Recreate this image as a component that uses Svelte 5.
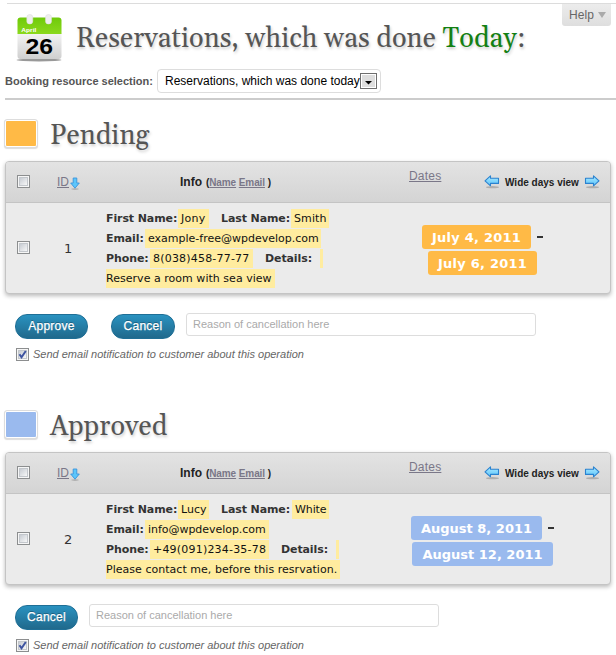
<script>
  const sections = [
    {
      kind: 'pending',
      title: 'Pending',
      id: '1',
      lines: [
        [
          { label: 'First Name:', lw: 72, value: 'Jony', vw: 31, ls: 0.25 },
          { label: 'Last Name:', lw: 70, value: 'Smith', vw: 38, ls: 0.1 }
        ],
        [{ label: 'Email:', lw: 39, value: 'example-free@wpdevelop.com', vw: 176, ls: 0 }],
        [
          { label: 'Phone:', lw: 44, value: '8(038)458-77-77', vw: 103, ls: 0.2 },
          { label: 'Details:', lw: 55, value: '', vw: 3, ls: 0 }
        ]
      ],
      details: 'Reserve a room with sea view',
      detailsWidth: 169,
      dates: ['July 4, 2011', 'July 6, 2011'],
      actions: ['Approve', 'Cancel']
    },
    {
      kind: 'approved',
      title: 'Approved',
      id: '2',
      lines: [
        [
          { label: 'First Name:', lw: 72, value: 'Lucy', vw: 31, ls: 0 },
          { label: 'Last Name:', lw: 71, value: 'White', vw: 37, ls: -0.1 }
        ],
        [{ label: 'Email:', lw: 39, value: 'info@wpdevelop.com', vw: 124, ls: -0.04 }],
        [
          { label: 'Phone:', lw: 44, value: '+49(091)234-35-78', vw: 119, ls: 0.2 },
          { label: 'Details:', lw: 55, value: '', vw: 3, ls: 0 }
        ]
      ],
      details: 'Please contact me, before this resrvation.',
      detailsWidth: 234,
      dates: ['August 8, 2011', 'August 12, 2011'],
      actions: ['Cancel']
    }
  ];
</script>

{#snippet box(checked)}
  <svg class="box" width="13" height="13" viewBox="0 0 13 13">
    <rect x=".5" y=".5" width="12" height="12" fill="#f6f6f6" stroke="#8c8e8f" />
    <rect x="2.5" y="2.5" width="8" height="8" fill="url(#boxfill)" stroke="#c3c7cc" />
    {#if checked}
      <path d="M3.5 6.2 L5.5 9.2 L9.8 3" fill="none" stroke="#3d53a0" stroke-width="2" />
    {/if}
  </svg>
{/snippet}

{#snippet arrow(dir)}
  <svg class="arrow" width="16" height="16" viewBox="0 0 16 16">
    <ellipse cx="8.5" cy="13.2" rx="6.5" ry="1.1" fill="#8a8a8a" opacity=".55" />
    <path
      transform={dir === 'right' ? 'translate(16 0) scale(-1 1)' : undefined}
      d="M1 6.8 L6.5 1.8 V4.2 H14.5 V9.4 H6.5 V11.8 Z"
      fill="url(#arrowfill)" stroke="#2b82cf" stroke-width="1.1" stroke-linejoin="round" />
  </svg>
{/snippet}

<div class="page">
  <svg class="defs" width="0" height="0">
    <defs>
      <linearGradient id="boxfill" x1="0" y1="0" x2="1" y2="1">
        <stop offset="0" stop-color="#c4c9d0" /><stop offset="1" stop-color="#fafafa" />
      </linearGradient>
      <linearGradient id="arrowfill" x1="0" y1="0" x2="0" y2="1">
        <stop offset="0" stop-color="#aeeaff" /><stop offset="1" stop-color="#58c4fb" />
      </linearGradient>
    </defs>
  </svg>
  <div class="help">Help <i></i></div>

  <header>
    <svg class="calendar" width="48" height="50" viewBox="0 0 48 50">
      <defs>
        <linearGradient id="paper" x1="0" y1="0" x2="0" y2="1">
          <stop offset="0" stop-color="#f4f4f4" /><stop offset="1" stop-color="#cfcfcf" />
        </linearGradient>
        <linearGradient id="green" x1="0" y1="0" x2="0" y2="1">
          <stop offset="0" stop-color="#6fca0a" /><stop offset="1" stop-color="#8bd91d" />
        </linearGradient>
        <filter id="soft"><feGaussianBlur stdDeviation=".7" /></filter>
      </defs>
      <ellipse cx="24" cy="46" rx="22.5" ry="1.5" fill="#999" filter="url(#soft)" />
      <path d="M2.5 19 H46.5 V42 Q46.5 45 43.5 45 H5.5 Q2.5 45 2.5 42 Z" fill="url(#paper)" />
      <path d="M2.5 20 V6.5 Q2.5 3.5 5.5 3.5 H43.5 Q46.5 3.5 46.5 6.5 V20 Z" fill="url(#green)" />
      <rect x="11.8" y=".5" width="6" height="9.5" rx="2.8" fill="#eee" stroke="#ddd" stroke-width=".5" />
      <rect x="30.5" y=".5" width="6" height="9.5" rx="2.8" fill="#eee" stroke="#ddd" stroke-width=".5" />
      <text x="6.3" y="18" class="month" textLength="15" lengthAdjust="spacingAndGlyphs">April</text>
      <text x="10.5" y="39.5" class="day" textLength="27.5" lengthAdjust="spacingAndGlyphs">26</text>
    </svg>
    <h1>Reservations, which was done <span>Today</span>:</h1>
  </header>

  <div class="selection">
    <b>Booking resource selection:</b>
    <div class="select">
      <span>Reservations, which was done today</span>
      <svg width="17" height="16" viewBox="0 0 17 16">
        <rect x=".5" y=".5" width="16" height="15" fill="#fff" stroke="#6e6e6e" />
        <rect x="2" y="2" width="13" height="12" fill="#dedede" />
        <path d="M5 8 H12 L8.5 11.5 Z" fill="#000" />
      </svg>
    </div>
  </div>

  {#each sections as s}
    <section class={s.kind}>
      <div class="title">
        <div class="swatch"></div>
        <h2>{s.title}</h2>
      </div>
      <div class="table">
        <div class="head">
          <div class="c-check">{@render box(false)}</div>
          <div class="c-id">
            <span class="link">ID</span>
            <svg width="10" height="13" viewBox="0 0 10 13">
              <ellipse cx="5" cy="12.1" rx="3.8" ry=".8" fill="#888" opacity=".5" />
              <path d="M3.2 1 H6.8 V6 H9.3 L5 11.2 L.7 6 H3.2 Z" fill="#5cc6fb" stroke="#3a94dc" stroke-width=".9" />
            </svg>
          </div>
          <div class="c-info"><b>Info</b><small>(<span class="link">Name</span> <span class="link">Email</span> )</small></div>
          <div class="c-dates"><span class="link">Dates</span></div>
          <div class="wide">{@render arrow('left')}<b>Wide days view</b>{@render arrow('right')}</div>
        </div>
        <div class="row">
          <div class="c-check">{@render box(false)}</div>
          <div class="num">{s.id}</div>
          <div class="info">
            {#each s.lines as line}
              <div class="line">
                {#each line as f}
                  <div class="field">
                    <b style:width="{f.lw}px">{f.label}</b><span class="hl" class:stub={!f.value} style:width="{f.vw}px" style:letter-spacing="{f.ls}px">{f.value}</span>
                  </div>
                {/each}
              </div>
            {/each}
            <div class="line"><span class="hl flush" style:width="{s.detailsWidth}px">{s.details}</span></div>
          </div>
          <div class="dates">
            <div><span class="date">{s.dates[0]}</span><i></i></div>
            <div><span class="date">{s.dates[1]}</span></div>
          </div>
        </div>
      </div>
      <div class="actions">
        {#each s.actions as a}
          <button class={a.toLowerCase()}>{a}</button>
        {/each}
        <div class="reason">Reason of cancellation here</div>
      </div>
      <div class="notify">{@render box(true)}<em>Send email notification to customer about this operation</em></div>
    </section>
  {/each}
</div>

<style>
  :global(body) { background: #fff; }
  .page, .page * { box-sizing: border-box; }
  .page {
    position: relative;
    width: 616px;
    height: 655px;
    overflow: hidden;
    padding: 3px 5px 0;
    font-family: "Liberation Sans", Arial, sans-serif;
    white-space: nowrap;
    color: #333;
  }
  .defs { position: absolute; }
  .page::before { content: ''; display: block; height: 1px; margin: 0 -5px 0 2px; background: #dcdcdc; }
  svg { display: block; flex: none; }
  .help {
    position: absolute; left: 562px; top: 4px; width: 49px; height: 22px;
    display: flex; align-items: center; gap: 4px; padding-left: 7px;
    background: linear-gradient(#ececec, #dedede); border-radius: 0 0 3px 3px;
    font-size: 12px; color: #666; letter-spacing: .1px;
  }
  .help i { border: 4px solid transparent; border-top: 6px solid #aaa; border-bottom: 0; }

  header { display: flex; height: 64px; padding: 10px 0 0 10px; }
  h1, h2 {
    margin: 0; font-family: Georgia, Gelasio, "Liberation Serif", serif; font-weight: 400;
    color: #555; text-shadow: 1px 2px 3px #ccc;
  }
  h1 { margin: 6px 0 0 13px; font-size: 27px; line-height: 38px; letter-spacing: .11px; }
  h1 span { color: #138013; }
  .month { font: bold 6px "Liberation Sans", sans-serif; fill: #fff; }
  .day { font: bold 22px "Liberation Sans", sans-serif; fill: #000; }

  .selection {
    display: flex; align-items: center; height: 32px; padding-bottom: 5px;
    border-bottom: 2px solid #ccc; margin-right: -5px;
  }
  .selection b { width: 152px; font-size: 11px; color: #555; }
  .select {
    display: flex; align-items: center; width: 224px; height: 24px; padding: 0 3px 0 7px;
    border: 1px solid #ddd; border-radius: 4px; color: #000; font-size: 12px;
  }
  .select span { width: 195px; }

  .title { display: flex; height: 61px; padding-top: 18px; }
  .swatch {
    width: 34px; height: 29px; margin: 1px 0 0 -1px; padding: 1px;
    border: 1px solid #ddd; border-radius: 3px; background: #ffba46 content-box;
    box-shadow: 0 1px 1px #ddd;
  }
  h2 { margin: 3px 0 0 12px; font-size: 27px; line-height: 30px; letter-spacing: .1px; }
  .approved .swatch { background-color: #9abaee; }
  .approved { margin-top: 29px; }

  .table {
    width: 606px; height: 133px; border: 1px solid #c4c4c4; border-radius: 4px;
    background: #ebebeb; box-shadow: 0 2px 4px #bbb; overflow: hidden;
  }
  .head {
    display: flex; height: 41px; align-items: center; border-bottom: 1px solid #c4c4c4;
    background: linear-gradient(#e3e3e3, #d4d4d4);
  }
  .link { color: #7a7788; text-decoration: underline; }
  .c-check { width: 51px; padding: 0 0 1px 11px; }
  .c-id { display: flex; align-items: center; width: 123px; font-size: 12px; }
  .c-id svg { margin: 2px 0 0 1px; }
  .c-info { width: 229px; font-size: 12px; color: #222; }
  .c-info small { margin-left: 4px; font-size: 10px; font-weight: bold; letter-spacing: -.1px; }
  .c-dates { width: 75px; font-size: 12px; padding-bottom: 12px; letter-spacing: .2px; }
  .wide { display: flex; align-items: center; gap: 5px; font-size: 10px; color: #222; }
  .wide b { width: 74px; }

  .row { display: flex; height: 90px; align-items: center; }
  .num { width: 49px; padding-left: 7px; font: 13px "DejaVu Sans", sans-serif; }
  .info { font: 11px "DejaVu Sans", sans-serif; color: #111; width: 276px; }
  .line { display: flex; height: 20px; gap: 12px; align-items: center; }
  .field { display: flex; align-items: center; }
  .field b { color: #333; letter-spacing: -.1px; }
  .hl { height: 19px; line-height: 19px; padding-left: 3px; background: #ffec9f; }
  .stub { padding: 0; }
  .flush { padding: 0; letter-spacing: .03px; }
  .dates {
    width: 200px; flex: 1; display: flex; flex-direction: column; gap: 2px;
    padding: 4px 27px 0 0; align-items: center;
  }
  .dates div { display: flex; height: 24px; }
  .dates i { width: 6px; height: 2px; margin: 11px 0 0 6px; background: #333; }
  .date {
    height: 24px; padding: 0 10px; background: #ffba46; border-radius: 3px;
    color: #fff; font: bold 13px/26px "DejaVu Sans", sans-serif; letter-spacing: .25px;
  }
  .approved .date { background: #9abaee; letter-spacing: 0; }

  .actions { display: flex; height: 52px; padding: 20px 0 0 10px; }
  button {
    height: 25px; padding: 0 0 1px; border: 1px solid #1f6f96; border-radius: 12px;
    background: linear-gradient(#2a92c0, #20698c); color: #fff;
    font: 12px "Liberation Sans", Arial, sans-serif; text-shadow: 0 -1px 0 rgba(0,0,0,.3);
    -webkit-text-stroke: .25px #fff; letter-spacing: .25px;
  }
  .approve { width: 73px; margin-right: 23px; }
  .cancel { width: 64px; margin-right: 11px; }
  .approved .cancel { width: 63px; }
  .reason {
    width: 350px; height: 23px; line-height: 20px; margin-top: -1px; padding-left: 6px;
    border: 1px solid #ddd; border-radius: 3px; font-size: 11px; color: #aaa;
  }
  .notify { display: flex; align-items: center; height: 16px; padding-left: 11px; font-size: 11px; color: #666; }
  .notify em { margin-left: 4px; }
</style>
